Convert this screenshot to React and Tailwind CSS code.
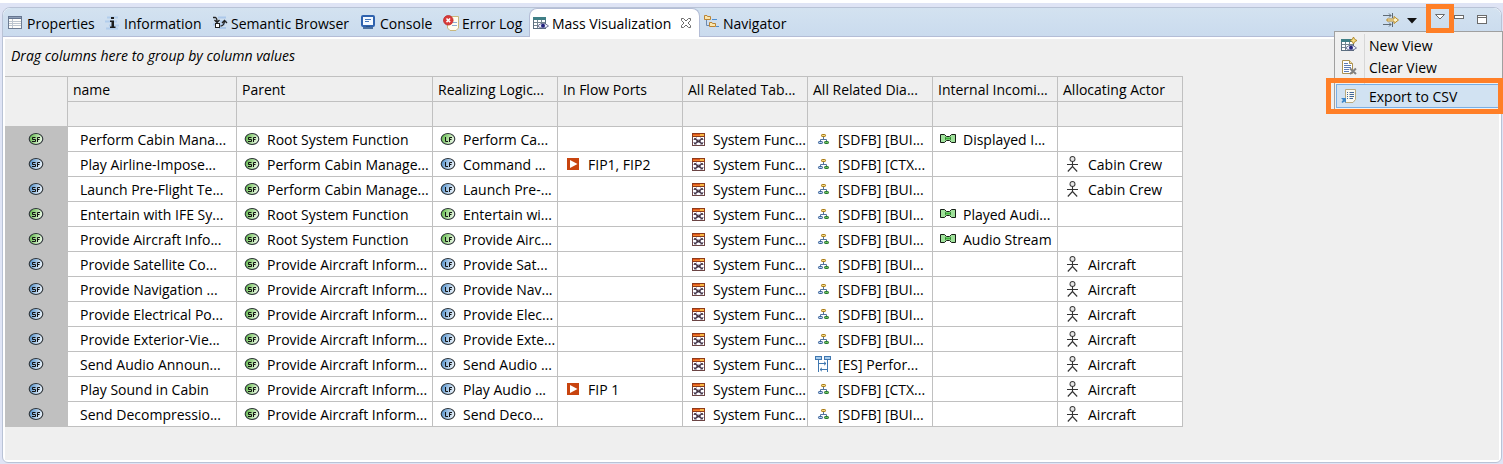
import React from 'react';

function Svg({ w = 16, h = 16, children }) {
  return (
    <svg width={w} height={h} viewBox={`0 0 ${w} ${h}`} className="shrink-0" aria-hidden="true">
      {children}
    </svg>
  );
}

function OvalIcon({ letters, tone }) {
  const id = `oval-${tone}`;
  const stops = tone === 'green' ? ['#5fb84a', '#a9dc98', '#f2fbef'] : ['#4f8fcb', '#a5c6e6', '#f3f8fd'];
  return (
    <Svg>
      <defs>
        <linearGradient id={id} x1="0" x2="1" y1="0.3" y2="0.6">
          <stop offset="0" stopColor={stops[0]} />
          <stop offset="0.5" stopColor={stops[1]} />
          <stop offset="1" stopColor={stops[2]} />
        </linearGradient>
      </defs>
      <ellipse cx="8" cy="8" rx="6.8" ry="5.5" fill={`url(#${id})`} stroke="#2d3338" strokeWidth="1.1" />
      {letters === 'SF' ? (
        <path d="M7.500 6.500H4.500V8.500H7.500V10.500H4M9.500 11V6.500H12M10 8.500H11.500" fill="none" stroke="#111" />
      ) : (
        <path d="M5.500 6V10.500H8M9.500 11V6.500H12M10 8.500H11.500" fill="none" stroke="#111" />
      )}
    </Svg>
  );
}

function PortIcon() {
  return (
    <Svg>
      <rect x="2" y="2" width="12" height="12" fill="#c8440f" />
      <path d="M5 4L12.500 8L5 12Z" fill="#fff" />
    </Svg>
  );
}

function MatrixIcon() {
  return (
    <Svg>
      <rect x="2.500" y="2.500" width="12" height="12" fill="#fff" stroke="#6b4444" />
      <rect x="2" y="2" width="13" height="4" fill="#8f3a1a" />
      <rect x="3" y="3" width="11" height="1" fill="#e2571c" />
      <rect x="3" y="4" width="11" height="1" fill="#f0862c" />
      <rect x="10" y="3" width="4" height="2" fill="#f8b545" />
      <path d="M3 8.500H14M3 11.500H14M6.500 6V14M10.500 6V14" stroke="#aaa4c6" strokeWidth=".8" />
      <path d="M4.500 7.500L12.500 13M12.500 7.500L4.500 13M6.500 10.200H10.500" stroke="#43343f" strokeWidth="1.100" />
      <path d="M4.500 9V7.500H6M12.500 9V7.500H11M4.500 11.500V13H6M12.500 11.500V13H11" fill="none" stroke="#43343f" strokeWidth=".8" />
    </Svg>
  );
}

function TreeIcon() {
  return (
    <Svg>
      <path d="M8.500 6V8.500M5.500 10V8.500H11.500V10" fill="none" stroke="#54749c" />
      <rect x="6.500" y="3.500" width="4" height="2" rx=".7" fill="#f9dd85" stroke="#a97a12" />
      <rect x="3.500" y="10.500" width="4" height="2" rx=".7" fill="#b9d0ec" stroke="#355f98" />
      <rect x="9.500" y="10.500" width="4" height="2" rx=".7" fill="#6fc35c" stroke="#217332" />
    </Svg>
  );
}

function ScenarioIcon() {
  return (
    <Svg>
      <rect x=".5" y=".5" width="6" height="3" fill="#a9ccec" stroke="#3f77b0" />
      <rect x="9.5" y=".5" width="6" height="3" fill="#a9ccec" stroke="#3f77b0" />
      <path d="M3.5 4V16M12.5 4V16" stroke="#3f77b0" />
      <path d="M4 7.5H11M9 5.8L11 7.5L9 9.2M12 13.5H5M7 11.8L5 13.5L7 15.2" fill="none" stroke="#3f77b0" />
    </Svg>
  );
}

function ExchangeIcon() {
  return (
    <Svg>
      <path d="M.5 3.500H4.500L6.500 5.500H9.500L11.500 3.500H15.500V11.500H11.500L9.500 9.500H6.500L4.500 11.500H.5Z" fill="#9fe09a" stroke="#161f16" />
      <path d="M5 5.500L7 7.500L5 9.500ZM11 5.500L9 7.500L11 9.500Z" fill="#2c8a2a" />
      <rect x="6.500" y="6.500" width="3" height="2" fill="#3fb53a" />
    </Svg>
  );
}

function ActorIcon() {
  return (
    <Svg>
      <circle cx="7.500" cy="3" r="2.500" fill="#e8e8e8" stroke="#444" strokeWidth="1.100" />
      <path d="M7.500 5.500V11M2 8.500H13M7.500 10.500L2.800 15.500M7.500 10.500L12.200 15.500" fill="none" stroke="#333" strokeWidth="1.100" />
    </Svg>
  );
}

function PropertiesIcon() {
  return (
    <Svg>
      <rect x=".5" y="2.500" width="13" height="11" fill="#fdfdfb" stroke="#6d7c93" />
      <rect x="0" y="1" width="14" height="3" fill="#667690" />
      <rect x="1" y="2" width="12" height="1" fill="#8fa0b8" />
      <path d="M4.500 4V13M1 6.500H13M1 8.500H13M1 10.500H13" stroke="#bcc5cf" />
    </Svg>
  );
}

function InfoIcon() {
  return (
    <Svg>
      <path d="M2 2.500H13M0 6.500H12M4 10.500H14M1 13.500H13" stroke="#9bc0ea" strokeWidth="2" opacity=".55" />
      <rect x="6" y="2" width="3" height="2" fill="#1c1c1c" />
      <path d="M5 5.500H9V11.500H10.500V13H5V11.500H6.500V7H5Z" fill="#1c1c1c" />
    </Svg>
  );
}

function SemanticIcon() {
  return (
    <Svg>
      <path d="M6 2.500H14M8 6.500H15M1 9.500H13M7 13H14" stroke="#8fb6e6" strokeWidth="2" opacity=".55" />
      <path d="M1 2.500H3.500Q5 3 5 6.500M2.500 5L5 7.500L7.500 5M8.500 11C11 11 12 9.500 12.500 6.500M10 8L12.500 5.500L15 8" fill="none" stroke="#222" strokeWidth="1.300" />
      <rect x="3.500" y="8.500" width="4" height="4" fill="#fff" stroke="#222" />
    </Svg>
  );
}

function ConsoleIcon() {
  return (
    <Svg>
      <rect x="1" y="1" width="12" height="10" rx="1" fill="#f4f9ff" stroke="#2f62ae" strokeWidth="2" />
      <path d="M4 4.500H10M4 6.500H8" stroke="#4377bd" />
      <rect x="5" y="11" width="4" height="1" fill="#23508f" />
      <rect x="2" y="12" width="10" height="2" fill="#4a6f9f" />
    </Svg>
  );
}

function ErrorLogIcon() {
  return (
    <Svg>
      <path d="M4.500 1.500H15.500V13L13 15.500H7L4.500 13Z" fill="#fffdf0" stroke="#c9b77c" />
      <path d="M10 7.500H14M9 10.500H14" stroke="#8bacd6" />
      <circle cx="5.300" cy="5.300" r="4.800" fill="#d93a3a" stroke="#b62424" strokeWidth=".7" />
      <path d="M3.500 3.500L7.100 7.100M7.100 3.500L3.500 7.100" stroke="#fff" strokeWidth="1.500" />
    </Svg>
  );
}

function ViewTableIcon({ spark = false }) {
  return (
    <Svg>
      <rect x=".5" y="2.500" width="12" height="11" fill="#fff" stroke="#5c6f80" />
      <rect x="0" y="2" width="13" height="3" fill="#3f7f86" />
      <path d="M1 7.500H12M1 10.500H12M4.500 5V13M8.500 5V13" stroke="#74858f" />
      <path d="M4.500 11Q10 5.500 15.500 11Q10 15.500 4.500 11Z" fill="#eef0ff" stroke="#50567a" strokeWidth=".8" />
      <circle cx="10" cy="10.800" r="2" fill="#25247c" />
      {spark && <path d="M12.500 0L13.700 2.300L16 3.500L13.700 4.700L12.500 7L11.300 4.700L9 3.500L11.300 2.300Z" fill="#f7df83" stroke="#a47816" strokeWidth=".8" />}
    </Svg>
  );
}

function CloseIcon() {
  return (
    <Svg w={12} h={12}>
      <path d="M1.500 1.500H3.500L6 4L8.500 1.500H10.500V3.500L8 6L10.500 8.500V10.500H8.500L6 8L3.500 10.500H1.500V8.500L4 6L1.500 3.500Z" fill="#fff" stroke="#6a6a6a" />
    </Svg>
  );
}

function NavigatorIcon() {
  return (
    <Svg>
      <path d="M2.500 5V10.500H6" fill="none" stroke="#6c89ae" />
      <path d="M.5 .5H3L3.500 1.500H6.500V4.500H.5Z" fill="#fbe6ac" stroke="#bb8434" />
      <path d="M5.500 7.500H8L8.500 8.500H11.500V11.500H5.500Z" fill="#fbe6ac" stroke="#bb8434" />
      <path d="M8 4.500H13M12 11.500H15" stroke="#4d8ed0" />
    </Svg>
  );
}

function ClearIcon() {
  return (
    <Svg>
      <path d="M1.500 1.500H8.500L11.500 4.500V14.500H1.500Z" fill="#fff" stroke="#ac9252" />
      <path d="M8.500 1.500V4.500H11.500" fill="#f3dfa4" stroke="#ac9252" />
      <path d="M3 4.500H7M3 6.500H10M3 8.500H10M3 10.500H8M3 12.500H8" stroke="#5d7cb4" />
      <path d="M9 9.500L15 15M15 9.500L9 15" stroke="#808080" strokeWidth="2" />
    </Svg>
  );
}

function ExportIcon() {
  return (
    <Svg>
      <path d="M4.500 1.500H14.500V11.500L12 14.500H4.500Z" fill="#fcfaf0" stroke="#b9aa80" />
      <path d="M6 4.500H7M8.500 4.500H13M6 6.500H7M8.500 6.500H13M6 8.500H7M8.500 8.500H13M6 10.500H7M8.500 10.500H12" stroke="#42679a" />
      <path d="M0 10H5V15L3.400 13.500L1.500 15L.5 14L2 12Z" fill="#3f88c8" />
    </Svg>
  );
}

function FlowIcon() {
  return (
    <Svg>
      <path d="M0 3.500H8M6 1.500L8 3.500L6 5.500M9.500 1V6M0 12.500H8M6 10.500L8 12.500L6 14.500M9.500 10V15" fill="none" stroke="#5f6b76" />
      <path d="M4 7H11V4.500L15.500 8L11 11.500V9H4Z" fill="#fff3c7" stroke="#b88a26" />
    </Svg>
  );
}

const icons = {
  sfg: <OvalIcon letters="SF" tone="green" />,
  sfb: <OvalIcon letters="SF" tone="blue" />,
  lfg: <OvalIcon letters="LF" tone="green" />,
  lfb: <OvalIcon letters="LF" tone="blue" />,
  port: <PortIcon />,
  matrix: <MatrixIcon />,
  tree: <TreeIcon />,
  scenario: <ScenarioIcon />,
  exchange: <ExchangeIcon />,
  actor: <ActorIcon />,
};

const tabs = [
  { label: 'Properties', icon: <PropertiesIcon />, width: 'w-[97px]' },
  { label: 'Information', icon: <InfoIcon />, width: 'w-[107px]' },
  { label: 'Semantic Browser', icon: <SemanticIcon />, width: 'w-[149px]' },
  { label: 'Console', icon: <ConsoleIcon />, width: 'w-[82px]' },
  { label: 'Error Log', icon: <ErrorLogIcon />, width: 'w-[86px]' },
  { label: 'Mass Visualization', icon: <ViewTableIcon />, width: 'w-[171px]', active: true },
  { label: 'Navigator', icon: <NavigatorIcon />, width: 'w-[98px] pl-[4px]' },
];

const headers = ['name', 'Parent', 'Realizing Logic...', 'In Flow Ports', 'All Related Tab...', 'All Related Dia...', 'Internal Incomi...', 'Allocating Actor'];

const root = 'Root System Function';
const manage = 'Perform Cabin Manage...';
const inform = 'Provide Aircraft Inform...';

const rows = [
  { tone: 'g', name: 'Perform Cabin Mana...', parent: root, logic: 'Perform Ca...', diagram: '[SDFB] [BUI...', exchange: 'Displayed I...' },
  { tone: 'b', name: 'Play Airline-Impose...', parent: manage, logic: 'Command ...', port: 'FIP1, FIP2', diagram: '[SDFB] [CTX...', actor: 'Cabin Crew' },
  { tone: 'b', name: 'Launch Pre-Flight Te...', parent: manage, logic: 'Launch Pre-...', diagram: '[SDFB] [BUI...', actor: 'Cabin Crew' },
  { tone: 'g', name: 'Entertain with IFE Sy...', parent: root, logic: 'Entertain wi...', diagram: '[SDFB] [BUI...', exchange: 'Played Audi...' },
  { tone: 'g', name: 'Provide Aircraft Info...', parent: root, logic: 'Provide Airc...', diagram: '[SDFB] [BUI...', exchange: 'Audio Stream' },
  { tone: 'b', name: 'Provide Satellite Co...', parent: inform, logic: 'Provide Sat...', diagram: '[SDFB] [BUI...', actor: 'Aircraft' },
  { tone: 'b', name: 'Provide Navigation ...', parent: inform, logic: 'Provide Nav...', diagram: '[SDFB] [BUI...', actor: 'Aircraft' },
  { tone: 'b', name: 'Provide Electrical Po...', parent: inform, logic: 'Provide Elec...', diagram: '[SDFB] [BUI...', actor: 'Aircraft' },
  { tone: 'b', name: 'Provide Exterior-Vie...', parent: inform, logic: 'Provide Exte...', diagram: '[SDFB] [BUI...', actor: 'Aircraft' },
  { tone: 'b', name: 'Send Audio Announ...', parent: inform, logic: 'Send Audio ...', diagram: '[ES] Perfor...', scenario: true, actor: 'Aircraft' },
  { tone: 'b', name: 'Play Sound in Cabin', parent: inform, logic: 'Play Audio ...', port: 'FIP 1', diagram: '[SDFB] [CTX...', actor: 'Aircraft' },
  { tone: 'b', name: 'Send Decompressio...', parent: inform, logic: 'Send Deco...', diagram: '[SDFB] [BUI...', actor: 'Aircraft' },
];

function Cell({ icon, text }) {
  return (
    <td className="h-[25px] border-r border-b border-[#c0c0c0] bg-white p-0">
      {text && (
        <div className="flex items-center gap-[7px] pl-[7px] whitespace-nowrap">
          {icons[icon]}
          <span className="pt-[2px]">{text}</span>
        </div>
      )}
    </td>
  );
}

function MenuItem({ icon, label, selected = false }) {
  return (
    <button type="button" role="menuitem" className={`flex h-[22px] w-full items-center text-left ${selected ? 'bg-[#d1e2f2] outline outline-[#78aee5]' : ''}`}>
      <span className="flex w-7 pl-[4px]">{icon}</span>
      <span className="pt-[2px] pl-[4px]">{label}</span>
    </button>
  );
}

export default function App() {
  return (
    <div className="bg-[#dfe4f5] font-['Open_Sans','Noto_Sans',sans-serif] text-[14px] leading-[20px] text-black">
      <div className="h-[3px] bg-white" />
      <main className="mt-[4px] mr-px ml-[2px] rounded-t-lg rounded-b-md border border-[#b9c3d6] bg-white">
        <header className="relative flex h-[29px] items-stretch rounded-t-lg border-b border-[#b4bdd6] bg-linear-to-b from-[#d3e2f0] to-[#cadbee]">
          <div role="tablist" className="flex pl-[5px]">
            {tabs.map((t) => (
              <div key={t.label} className={`flex items-center ${t.width} ${t.active ? '-mb-px rounded-t-lg border-x border-t border-[#b4bdd6] bg-white pl-[3px]' : 'pt-[2px]'}`}>
                <button type="button" role="tab" aria-selected={!!t.active} className="flex items-center gap-[3px] whitespace-nowrap">
                  {t.icon}
                  <span className="pt-[2px]">{t.label}</span>
                </button>
                {t.active && <button type="button" aria-label="Close tab" className="ml-auto pr-[7px]"><CloseIcon /></button>}
              </div>
            ))}
          </div>
          <div className="ml-auto flex items-start pr-[13px]">
            <button type="button" aria-label="Show flow" className="mt-[4px]"><FlowIcon /></button>
            <button type="button" aria-label="Flow options" className="mt-[10px] ml-2"><Svg w={10} h={6}><path d="M0 0H10L5 5.500Z" fill="#111" /></Svg></button>
            <button type="button" aria-label="View menu" className="relative z-10 mt-px ml-[14px] flex h-[19px] w-[18px] justify-center pt-[4px]">
              <Svg w={12} h={8}><path d="M1.500 1.500H10.500L6 6Z" fill="#fff" stroke="#6b6b6b" /></Svg>
              <span className="absolute -inset-[5px] border-[5px] border-[#ff7f27]" />
            </button>
            <button type="button" aria-label="Minimize" className="mt-[6px] ml-[4px]"><Svg w={12} h={6}><rect x="1.500" y="1.500" width="9" height="3" fill="#fff" stroke="#6b6b6b" /></Svg></button>
            <button type="button" aria-label="Maximize" className="mt-[6px] ml-[11px]"><Svg w={12} h={12}><rect x="1.500" y="1.500" width="9" height="8" fill="#fff" stroke="#6b6b6b" /><path d="M1 3.500H11" stroke="#6b6b6b" /></Svg></button>
          </div>
          <div role="menu" className="absolute top-[23px] -right-[2px] w-[169px] border border-[#a0a0a0] bg-[#f0f0f0] p-[2px]">
            <span className="absolute inset-y-[2px] left-[29px] w-px bg-[#d7d7d7]" />
            <MenuItem icon={<ViewTableIcon spark />} label="New View" />
            <MenuItem icon={<ClearIcon />} label="Clear View" />
            <div className="relative mt-[7px]">
              <MenuItem icon={<ExportIcon />} label="Export to CSV" selected />
              <span className="absolute -top-[7px] -right-[3px] -bottom-[7px] -left-[11px] border-[5px] border-[#ff7f27]" />
            </div>
          </div>
        </header>
        <section className="m-[2px] bg-[#efefef] pb-[33px]">
          <p className="flex h-[37px] items-center pb-[4px] pl-[6px] italic">Drag columns here to group by column values</p>
          <table className="w-[1178px] table-fixed border-separate border-spacing-0 border-t border-[#c0c0c0]">
            <colgroup>
              <col className="w-[63px]" />
              <col className="w-[169px]" />
              <col className="w-[196px]" />
              <col /><col /><col /><col /><col /><col />
            </colgroup>
            <thead>
              <tr>
                <td rowSpan={2} className="border-r border-b border-[#c0c0c0]" />
                {headers.map((h) => (
                  <th key={h} scope="col" className="h-[25px] border-r border-b border-[#c0c0c0] p-0 pt-[2px] pl-[5px] text-left font-normal whitespace-nowrap">{h}</th>
                ))}
              </tr>
              <tr>
                {headers.map((h) => <td key={h} className="h-[25px] border-r border-b border-[#c0c0c0] p-0" />)}
              </tr>
            </thead>
            <tbody>
              {rows.map((r) => (
                <tr key={r.name}>
                  <td className="h-[25px] border-b border-[#c0c0c0] bg-[#c0c0c0] p-0"><div className="flex justify-center pr-px">{icons[`sf${r.tone}`]}</div></td>
                  <td className="h-[25px] border-r border-b border-[#c0c0c0] bg-white p-0 pt-[2px] pl-[12px] whitespace-nowrap">{r.name}</td>
                  <Cell icon="sfg" text={r.parent} />
                  <Cell icon={`lf${r.tone}`} text={r.logic} />
                  <Cell icon="port" text={r.port} />
                  <Cell icon="matrix" text="System Func..." />
                  <Cell icon={r.scenario ? 'scenario' : 'tree'} text={r.diagram} />
                  <Cell icon="exchange" text={r.exchange} />
                  <Cell icon="actor" text={r.actor} />
                </tr>
              ))}
            </tbody>
          </table>
        </section>
      </main>
      <div className="flex h-[2px] items-end"><div className="ml-[974px] h-px w-[169px] bg-[#9a9fa8]" /></div>
    </div>
  );
}
